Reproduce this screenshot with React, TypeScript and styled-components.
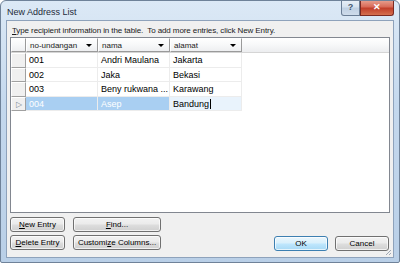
import styled, { createGlobalStyle } from 'styled-components'

const GlobalStyle = createGlobalStyle`
  html, body {
    margin: 0;
    padding: 0;
    background: #ffffff;
  }
  * { box-sizing: border-box; }
`

const UI_FONT = `"Liberation Sans", Arial, sans-serif`

const Window = styled.div`
  width: 400px;
  height: 263px;
  display: flex;
  flex-direction: column;
  padding: 0 5px 4px 5px;
  border: 1px solid #6f8299;
  border-radius: 6px 6px 2px 2px;
  background: linear-gradient(180deg, #dce9f6 0%, #c4d8ed 40%, #b9cfe7 100%);
  font-family: ${UI_FONT};
  overflow: hidden;
`

const TitleBar = styled.div`
  height: 19px;
  display: flex;
  align-items: flex-start;
  justify-content: space-between;
`

const Title = styled.div`
  padding: 5px 0 0 1px;
  font-size: 9px;
  line-height: 12px;
  color: #1e2b3a;
`

const CaptionButtons = styled.div`
  display: flex;
  margin-top: -1px;
  margin-right: 0;
`

const CaptionButton = styled.div<{ $close?: boolean }>`
  height: 16px;
  width: ${p => (p.$close ? '34px' : '19px')};
  display: flex;
  align-items: center;
  justify-content: center;
  border: 1px solid ${p => (p.$close ? '#7a2a22' : '#6a7d95')};
  border-top: none;
  border-radius: ${p => (p.$close ? '0 0 3px 0' : '0 0 0 3px')};
  background: ${p =>
    p.$close
      ? 'linear-gradient(180deg, #e8a493 0%, #d86b58 45%, #c13f2a 55%, #d4704f 100%)'
      : 'linear-gradient(180deg, #e9f0f8 0%, #d6e2ef 45%, #bfd0e3 55%, #cfdceb 100%)'};
  color: ${p => (p.$close ? '#ffffff' : '#44576e')};
  font-size: 9px;
  font-weight: bold;
  line-height: 1;
`

const Client = styled.div`
  flex: 1;
  display: flex;
  flex-direction: column;
  padding: 0 3px 7px 3px;
  background: #f0f0f0;
  border: 1px solid #8ea2bb;
  position: relative;
`

const Instruction = styled.div`
  height: 16px;
  padding: 4px 0 0 2px;
  font-size: 8px;
  line-height: 11px;
  color: #1a1a1a;
  white-space: nowrap;
  letter-spacing: -0.1px;
`

const Table = styled.div`
  height: 176px;
  border: 1px solid #828790;
  background: #ffffff;
  display: flex;
  flex-direction: column;
`

const HeaderRow = styled.div`
  height: 15px;
  display: flex;
  background: linear-gradient(180deg, #ffffff 0%, #f7f8f9 50%, #ecedef 100%);
  border-bottom: 1px solid #d5d5d5;
`

const HeaderCell = styled.div<{ $w: number }>`
  width: ${p => p.$w}px;
  flex: none;
  display: flex;
  align-items: center;
  justify-content: space-between;
  padding: 0 5px 0 3px;
  border: 1px solid #9a9a9a;
  border-left-color: #ffffff;
  border-top-color: #ffffff;
  font-size: 8px;
  color: #222;
`

const Arrow = styled.span`
  width: 0;
  height: 0;
  border-left: 3px solid transparent;
  border-right: 3px solid transparent;
  border-top: 3px solid #000;
  margin-top: 1px;
`

const Row = styled.div<{ $h: number }>`
  height: ${p => p.$h}px;
  display: flex;
`

const Selector = styled.div`
  width: 15px;
  flex: none;
  display: flex;
  align-items: center;
  justify-content: center;
  background: #f0f0f0;
  border: 1px solid #a0a0a0;
  border-left-color: #ffffff;
  border-top-color: #ffffff;
  color: #7d8a96;
  font-size: 8px;
`

const Cell = styled.div<{ $sel?: 'full' | 'edit' }>`
  width: 72px;
  flex: none;
  display: flex;
  align-items: center;
  padding: 0 3px;
  border-right: 1px solid #ececec;
  border-bottom: 1px solid #ececec;
  font-size: 9px;
  white-space: nowrap;
  overflow: hidden;
  color: ${p => (p.$sel === 'full' ? '#ffffff' : '#000000')};
  background: ${p =>
    p.$sel === 'full' ? '#a9cff2' : p.$sel === 'edit' ? '#e9f3fc' : '#ffffff'};
`

const Caret = styled.span`
  display: inline-block;
  width: 1px;
  height: 10px;
  background: #000;
  margin-left: 1px;
`

const Bottom = styled.div`
  margin-top: 4px;
  display: flex;
  justify-content: space-between;
  align-items: flex-end;
`

const LeftButtons = styled.div`
  display: grid;
  grid-template-columns: 55px 88px;
  grid-auto-rows: 15px;
  column-gap: 8px;
  row-gap: 3px;
`

const RightButtons = styled.div`
  display: flex;
  gap: 7px;
  margin-bottom: -1px;
  margin-right: 1px;
`

const Button = styled.div<{ $default?: boolean; $w?: number }>`
  height: 15px;
  width: ${p => (p.$w ? `${p.$w}px` : 'auto')};
  display: flex;
  align-items: center;
  justify-content: center;
  border: 1px solid ${p => (p.$default ? '#3c7fb1' : '#707070')};
  border-radius: 3px;
  background: ${p =>
    p.$default
      ? 'linear-gradient(180deg, #eaf6fd 0%, #d9f0fc 45%, #bee6fd 55%, #a7d9f5 100%)'
      : 'linear-gradient(180deg, #f2f2f2 0%, #ebebeb 45%, #dddddd 55%, #cfcfcf 100%)'};
  box-shadow: inset 0 0 0 1px rgba(255, 255, 255, 0.7);
  font-size: 8px;
  color: #000;
  u { text-decoration: underline; }
`

const Grip = styled.svg`
  position: absolute;
  right: 1px;
  bottom: 1px;
`

const columns = ['no-undangan', 'nama', 'alamat']

const rows = [
  ['001', 'Andri Maulana', 'Jakarta'],
  ['002', 'Jaka', 'Bekasi'],
  ['003', 'Beny rukwana ...', 'Karawang'],
  ['004', 'Asep', 'Bandung'],
]

const rowHeights = [15, 14, 15, 14]

export default function App() {
  return (
    <>
      <GlobalStyle />
      <Window>
        <TitleBar>
          <Title>New Address List</Title>
          <CaptionButtons>
            <CaptionButton>?</CaptionButton>
            <CaptionButton $close>✕</CaptionButton>
          </CaptionButtons>
        </TitleBar>
        <Client>
          <Instruction>
            <u>T</u>ype recipient information in the table.&nbsp; To add more entries, click New Entry.
          </Instruction>
          <Table>
            <HeaderRow>
              <HeaderCell $w={15} />
              {columns.map(c => (
                <HeaderCell key={c} $w={72}>
                  <span>{c}</span>
                  <Arrow />
                </HeaderCell>
              ))}
            </HeaderRow>
            {rows.map((r, i) => {
              const last = i === rows.length - 1
              return (
                <Row key={r[0]} $h={rowHeights[i]}>
                  <Selector>{last ? '▷' : ''}</Selector>
                  <Cell $sel={last ? 'full' : undefined}>{r[0]}</Cell>
                  <Cell $sel={last ? 'full' : undefined}>{r[1]}</Cell>
                  <Cell $sel={last ? 'edit' : undefined}>
                    {r[2]}
                    {last && <Caret />}
                  </Cell>
                </Row>
              )
            })}
          </Table>
          <Bottom>
            <LeftButtons>
              <Button><span><u>N</u>ew Entry</span></Button>
              <Button><span><u>F</u>ind...</span></Button>
              <Button><span><u>D</u>elete Entry</span></Button>
              <Button><span>Customi<u>z</u>e Columns...</span></Button>
            </LeftButtons>
            <RightButtons>
              <Button $default $w={54}>OK</Button>
              <Button $w={54}>Cancel</Button>
            </RightButtons>
          </Bottom>
          <Grip width="8" height="8" viewBox="0 0 8 8">
            <path d="M7 2 L2 7 M7 5 L5 7" stroke="#a0a8b4" strokeWidth="1" />
          </Grip>
        </Client>
      </Window>
    </>
  )
}
